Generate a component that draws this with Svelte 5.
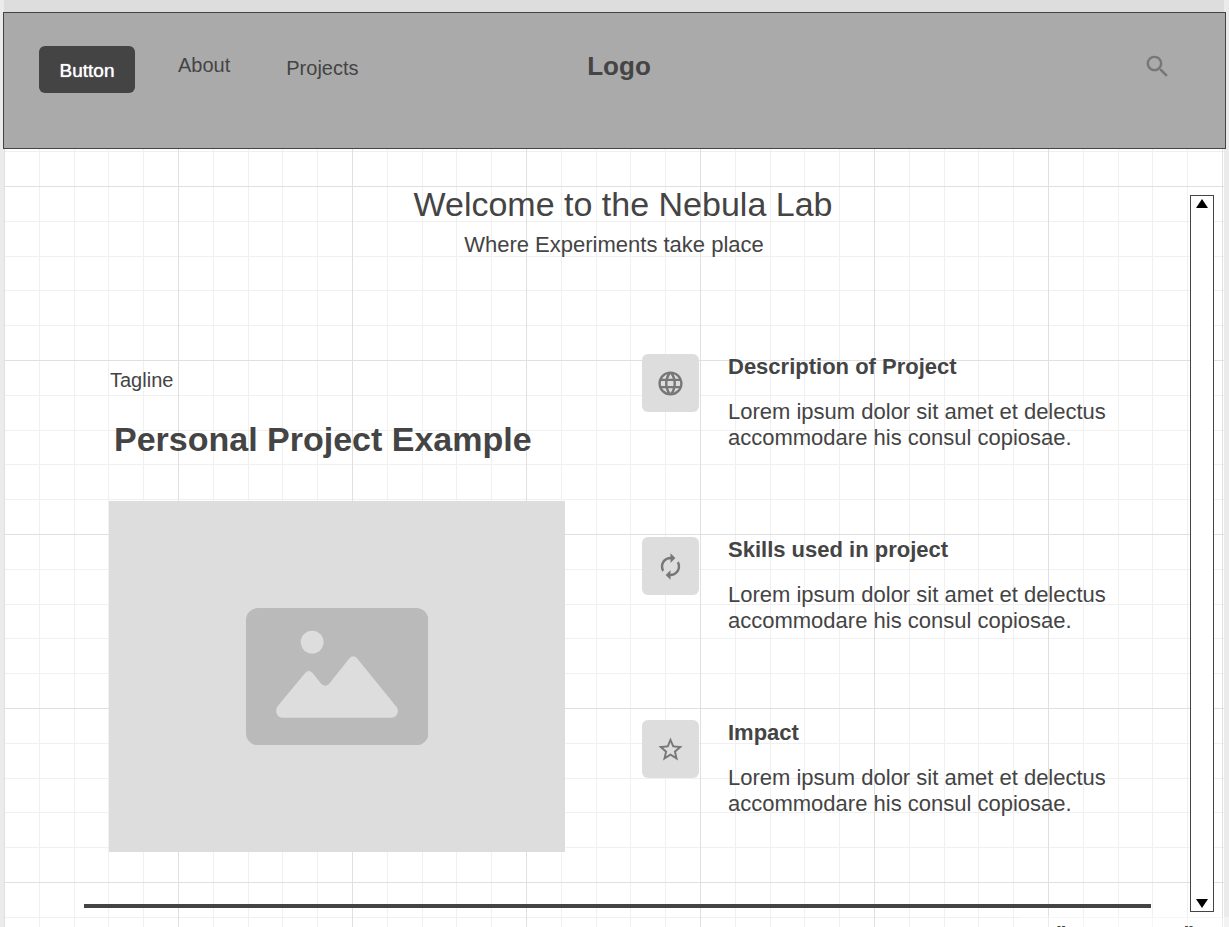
<script lang="ts">
  const features = [
    { icon: 'globe', title: 'Description of Project' },
    { icon: 'cycle', title: 'Skills used in project' },
    { icon: 'star', title: 'Impact' },
  ];
  const icons: Record<string, string> = {
    globe:
      'M11.99 2C6.47 2 2 6.48 2 12s4.47 10 9.99 10C17.52 22 22 17.52 22 12S17.52 2 11.99 2zm6.93 6h-2.95c-.32-1.25-.78-2.45-1.38-3.56 1.84.63 3.37 1.91 4.33 3.56zM12 4.04c.83 1.2 1.48 2.53 1.91 3.96h-3.82c.43-1.43 1.08-2.76 1.91-3.96zM4.26 14C4.1 13.36 4 12.69 4 12s.1-1.36.26-2h3.38c-.08.66-.14 1.32-.14 2s.06 1.34.14 2H4.26zm.82 2h2.95c.32 1.25.78 2.45 1.38 3.56-1.84-.63-3.37-1.9-4.33-3.56zm2.95-8H5.08c.96-1.66 2.49-2.93 4.33-3.56C8.81 5.55 8.35 6.75 8.03 8zM12 19.96c-.83-1.2-1.48-2.53-1.91-3.96h3.82c-.43 1.43-1.08 2.76-1.91 3.96zM14.34 14H9.66c-.09-.66-.16-1.32-.16-2s.07-1.35.16-2h4.68c.09.65.16 1.32.16 2s-.07 1.34-.16 2zm.25 5.56c.6-1.11 1.06-2.31 1.38-3.56h2.95c-.96 1.65-2.49 2.93-4.33 3.56zM16.36 14c.08-.66.14-1.32.14-2s-.06-1.34-.14-2h3.38c.16.64.26 1.31.26 2s-.1 1.36-.26 2h-3.38z',
    cycle:
      'M12 6v3l4-4-4-4v3c-4.42 0-8 3.58-8 8 0 1.57.46 3.03 1.24 4.26L6.7 14.8c-.45-.83-.7-1.79-.7-2.8 0-3.31 2.69-6 6-6zm6.76 1.74L17.3 9.2c.44.84.7 1.79.7 2.8 0 3.31-2.69 6-6 6v-3l-4 4 4 4v-3c4.42 0 8-3.58 8-8 0-1.57-.46-3.03-1.24-4.26z',
    star:
      'M22 9.24l-7.19-.62L12 2 9.19 8.63 2 9.24l5.46 4.73L5.82 21 12 17.27 18.18 21l-1.63-7.03L22 9.24zM12 15.4l-3.76 2.27 1-4.28-3.32-2.88 4.38-.38L12 6.1l1.71 4.04 4.38.38-3.32 2.88 1 4.28L12 15.4z',
  };
</script>

<div class="page">
  <div class="strip"></div>
  <header>
    <nav>
      <button class="primary" type="button">Button</button>
      <a class="about" href="#about">About</a>
      <a class="projects" href="#projects">Projects</a>
    </nav>
    <strong class="logo">Logo</strong>
    <button class="search" type="button" aria-label="Search">
      <svg viewBox="0 0 24 24" width="29" height="29"><path d="M15.5 14h-.79l-.28-.27C15.41 12.59 16 11.11 16 9.5 16 5.91 13.09 3 9.5 3S3 5.91 3 9.5 5.91 16 9.5 16c1.61 0 3.09-.59 4.23-1.57l.27.28v.79l5 4.99L20.49 19l-4.99-5zm-6 0C7.01 14 5 11.99 5 9.5S7.01 5 9.5 5 14 7.01 14 9.5 11.99 14 9.5 14z" /></svg>
    </button>
  </header>

  <div class="canvas">
    <main>
      <section class="hero">
        <h1>Welcome to the Nebula Lab</h1>
        <p>Where Experiments take place</p>
      </section>

      <section class="project">
        <div class="showcase">
          <p class="tagline">Tagline</p>
          <h2>Personal Project Example</h2>
          <div class="image">
            <svg viewBox="0 0 182 137" role="img" aria-label="Project image">
              <rect width="182" height="137" rx="12" fill="#bababa" />
              <circle cx="66" cy="34" r="11.4" fill="#ddd" />
              <path d="M31.5 98 59 64.800q3.500-4 7.500 0L75 75.500q4 4 8 0L103 50.500q4-4.500 8 0L150.500 99c3 5-.5 10.500-5.500 10.500H36.500c-5 0-8.500-6-5-11.500z" fill="#ddd" />
            </svg>
          </div>
        </div>

        <ul class="features">
          {#each features as f}
            <li>
              <span class="tile"><svg viewBox="0 0 24 24" width="29" height="29"><path d={icons[f.icon]} /></svg></span>
              <div>
                <h3>{f.title}</h3>
                <p>Lorem ipsum dolor sit amet et delectus accommodare his consul copiosae.</p>
              </div>
            </li>
          {/each}
        </ul>
      </section>

      <hr />
    </main>

    <div class="scrollbar">
      <button type="button" aria-label="Scroll up"><svg viewBox="0 0 12 9" width="12" height="9"><path d="M6 0l6 9H0z" /></svg></button>
      <button type="button" aria-label="Scroll down"><svg viewBox="0 0 12 9" width="12" height="9"><path d="M6 9l6-9H0z" /></svg></button>
    </div>

    <div class="quote"><span>"</span><span>"</span></div>
  </div>
</div>

<style>
  :global(body) { margin: 0; background: #ebebeb; }
  .page {
    box-sizing: border-box;
    height: 100vh;
    overflow: hidden;
    padding: 0 3px;
    display: flex;
    flex-direction: column;
    color: #444;
    font-family: "Liberation Sans", Arial, sans-serif;
  }
  h1, h2, h3, p, ul { margin: 0; padding: 0; }
  .strip { height: 12px; flex: none; margin: 0 2px 0 1px; background: #ddd; }
  header {
    box-sizing: border-box;
    flex: none;
    height: 137px;
    padding: 33px 26px 0 35px;
    border: 1px solid #444;
    background: #aaa;
    display: grid;
    grid-template-columns: 1fr auto 1fr;
    align-items: start;
  }
  nav { display: flex; align-items: start; font-size: 20px; line-height: 24px; }
  nav a { color: #444; text-decoration: none; }
  .about { margin: 7px 0 0 43px; }
  .projects { margin: 10px 0 0 56px; }
  button { border: 0; padding: 0; background: none; font: inherit; cursor: pointer; }
  .primary {
    width: 96px;
    height: 47px;
    padding-top: 2px;
    border-radius: 6px;
    background: #444;
    color: #fff;
    font-size: 19px;
    text-shadow: 0 0 1px #fff;
  }
  .logo { font-size: 26px; line-height: 30px; margin-top: 5px; }
  .search { justify-self: end; height: 29px; margin: 6px 27px 0 0; }
  svg { display: block; }
  .search svg, .tile svg { fill: #777; }

  .canvas {
    --stops: transparent 35px, #f0f0f0 35px 36px, transparent 36px 70px, #f0f0f0 70px 71px,
      transparent 71px 104px, #f0f0f0 104px 105px, transparent 105px 139px, #f0f0f0 139px 140px, transparent 140px;
    position: relative;
    flex: 1;
    min-height: 0;
    margin: 0 2px 0 1px;
    display: flex;
    background:
      linear-gradient(to right, #e0e0e0 1px, transparent 1px) 0 0 / 174px 174px,
      linear-gradient(#e0e0e0 1px, transparent 1px) 0 37px / 174px 174px,
      linear-gradient(to right, var(--stops)) 0 0 / 174px 174px,
      linear-gradient(var(--stops)) 0 37px / 174px 174px,
      #fff;
  }
  main { flex: 1; min-width: 0; }
  .hero { padding: 34px 0 0 52px; text-align: center; }
  .hero h1 { font-size: 34px; line-height: 42px; font-weight: 400; }
  .hero p { font-size: 22px; line-height: 26px; margin: 7px 18px 0 0; }
  .project {
    display: grid;
    grid-template-columns: 456fr 465fr;
    column-gap: 77px;
    padding: 96px 83px 0 105px;
  }
  .tagline { font-size: 20px; line-height: 24px; padding: 14px 0 0 1px; }
  h2 { font-size: 34px; line-height: 42px; margin: 26px 0 41px 5px; }
  .image { aspect-ratio: 456 / 351; background: #ddd; display: grid; place-items: center; }
  .image svg { width: 40%; }
  .features { list-style: none; }
  li { display: flex; gap: 29px; height: 183px; }
  .tile {
    flex: none;
    width: 57px;
    height: 58px;
    border-radius: 6px;
    background: #ddd;
    display: grid;
    place-items: center;
  }
  h3 { font-size: 22px; line-height: 26px; margin-bottom: 19px; }
  li p { font-size: 22px; line-height: 26px; }
  hr { margin: 1px 39px 0 80px; border: 0; height: 4px; background: #444; }
  .scrollbar {
    box-sizing: border-box;
    width: 24px;
    margin: 46px 10px 15px 0;
    padding: 3px 0;
    border: 1px solid #444;
    background: #fff;
    display: flex;
    flex-direction: column;
    justify-content: space-between;
    align-items: center;
  }
  .quote {
    position: absolute;
    right: -5px;
    bottom: 0;
    box-sizing: border-box;
    width: 209px;
    height: 10px;
    padding: 4px 35px 0 36px;
    overflow: hidden;
    display: flex;
    justify-content: space-between;
    background: rgba(255, 255, 255, 0.4);
    font-size: 22px;
    line-height: 26px;
    font-weight: 700;
  }
</style>
